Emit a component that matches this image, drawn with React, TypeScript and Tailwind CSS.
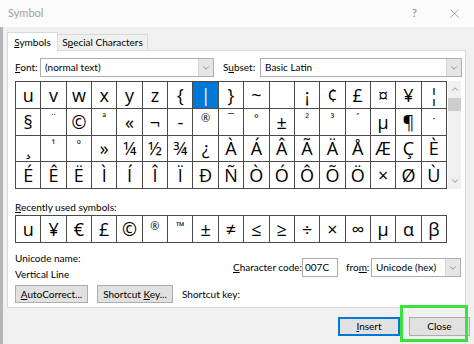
import { X, ChevronDown, ChevronUp } from 'lucide-react';

const gridRows = [
  ['u', 'v', 'w', 'x', 'y', 'z', '{', '|', '}', '~', '', '¡', '¢', '£', '¤', '¥', '¦'],
  ['§', '¨', '©', 'ª', '«', '¬', '-', '®', '¯', '°', '±', '²', '³', '´', 'µ', '¶', '·'],
  ['¸', '¹', 'º', '»', '¼', '½', '¾', '¿', 'À', 'Á', 'Â', 'Ã', 'Ä', 'Å', 'Æ', 'Ç', 'È'],
  ['É', 'Ê', 'Ë', 'Ì', 'Í', 'Î', 'Ï', 'Ð', 'Ñ', 'Ò', 'Ó', 'Ô', 'Õ', 'Ö', '×', 'Ø', 'Ù'],
];

const recent = ['u', '¥', '€', '£', '©', '®', '™', '±', '≠', '≤', '≥', '÷', '×', '∞', 'µ', 'α', 'β'];

// 작은 기호는 셀 안에서 위로 붙어 보이게
const small = new Set(['¨', '®', '¯', '°', '²', '³', '´', '¹', 'ª', 'º', '™', '·']);

const SelectBox = ({ value, className }: { value: string; className: string }) => (
  <div className={`flex h-[19px] items-center border border-[#adadad] bg-white ${className}`}>
    <span className="flex-1 pl-1 truncate">{value}</span>
    <div className="flex h-full w-[15px] items-center justify-center border-l border-[#d4d4d4] bg-[#e6e6e6]">
      <ChevronDown size={10} strokeWidth={1.5} className="text-[#606060]" />
    </div>
  </div>
);

const Cell = ({ ch, selected }: { ch: string; selected?: boolean }) => (
  <div
    className={`flex items-center justify-center border-r border-b border-[#4a4a4a] font-['Open_Sans','DejaVu_Sans',sans-serif] leading-none ${
      selected ? 'bg-[#0078d7] text-white' : 'text-black'
    } ${small.has(ch) ? 'text-[11px] pb-2' : 'text-[18px]'}`}
  >
    {ch}
  </div>
);

const App = () => {
  return (
    <div className="relative flex h-[344px] w-[474px] flex-col overflow-hidden whitespace-nowrap bg-[#f0f0f0] font-['Lato','DejaVu_Sans',sans-serif] text-[10px] text-black">
      {/* 타이틀바 */}
      <div className="flex h-[27px] items-center bg-[#fbfbfb] pl-2 pr-3">
        <span className="flex-1 text-[11px] text-[#a0a0a0]">Symbol</span>
        <span className="mr-[30px] text-[11px] text-[#8a8a8a]">?</span>
        <X size={15} strokeWidth={1} className="text-[#777]" />
      </div>

      <div className="flex flex-1 flex-col border-l-[3px] border-[#b5b5b5] pl-1">
        {/* 탭 */}
        <div className="mt-[5px] flex h-[18px] items-end">
          <div className="-mb-px z-10 flex h-[19px] w-[51px] items-center justify-center border border-b-0 border-[#d9d9d9] bg-white">
            <span><span className="underline">S</span>ymbols</span>
          </div>
          <div className="flex h-[16px] w-[90px] items-center justify-center border border-l-0 border-b-0 border-[#d9d9d9] bg-[#f0f0f0]">
            <span>S<span className="underline">p</span>ecial Characters</span>
          </div>
        </div>

        {/* 본문 패널 */}
        <div className="flex h-[258px] w-[459px] flex-col border border-[#d9d9d9] bg-white pl-[7px] pt-[7px]">
          <div className="flex h-[19px] items-center">
            <span className="w-[25px]"><span className="underline">F</span>ont:</span>
            <SelectBox value="(normal text)" className="w-[174px]" />
            <span className="ml-[9px] w-[37px]">S<span className="underline">u</span>bset:</span>
            <SelectBox value="Basic Latin" className="w-[202px]" />
          </div>

          {/* 기호 그리드 */}
          <div className="mt-[4px] flex h-[108px]">
            <div className="grid w-[432px] grid-cols-[repeat(17,minmax(0,1fr))] grid-rows-[repeat(4,minmax(0,1fr))] border-l border-t border-[#4a4a4a]">
              {gridRows.map((row, r) =>
                row.map((ch, c) => <Cell key={`${r}-${c}`} ch={ch} selected={r === 0 && c === 7} />),
              )}
            </div>
            <div className="ml-px flex w-[13px] flex-col items-center bg-[#f0f0f0]">
              <ChevronUp size={10} strokeWidth={1.5} className="mt-[3px] text-[#606060]" />
              <div className="mt-[4px] h-[13px] w-full bg-[#cdcdcd]" />
              <div className="flex-1" />
              <ChevronDown size={10} strokeWidth={1.5} className="mb-[3px] text-[#606060]" />
            </div>
          </div>

          <div className="mt-[10px] h-[16px] leading-[16px]">
            <span className="underline">R</span>ecently used symbols:
          </div>
          <div className="grid h-[28px] w-[432px] grid-cols-[repeat(17,minmax(0,1fr))] border-l border-t border-[#4a4a4a]">
            {recent.map((ch, i) => (
              <Cell key={i} ch={ch} />
            ))}
          </div>

          {/* 유니코드 정보 */}
          <div className="mt-[7px] flex">
            <div className="w-[218px] leading-[16px]">
              <div>Unicode name:</div>
              <div>Vertical Line</div>
            </div>
            <div className="mt-[8px] flex h-[19px] items-center">
              <span className="w-[67px]"><span className="underline">C</span>haracter code:</span>
              <div className="ml-[2px] flex h-[19px] w-[36px] items-center border border-[#adadad] pl-[2px]">007C</div>
              <span className="ml-[8px] w-[23px]">fro<span className="underline">m</span>:</span>
              <SelectBox value="Unicode (hex)" className="ml-[2px] w-[90px]" />
            </div>
          </div>

          {/* 버튼 */}
          <div className="mt-[3px] flex items-center">
            <div className="flex h-[18px] w-[73px] items-center justify-center border border-[#adadad] bg-[#e1e1e1]">
              <span><span className="underline">A</span>utoCorrect...</span>
            </div>
            <div className="ml-[9px] flex h-[18px] w-[76px] items-center justify-center border border-[#adadad] bg-[#e1e1e1]">
              <span>Shortcut <span className="underline">K</span>ey...</span>
            </div>
            <span className="ml-[9px]">Shortcut key:</span>
          </div>
        </div>

        {/* 하단 버튼 */}
        <div className="flex justify-end pr-[4px] pt-[9px]">
          <div className="flex h-[19px] w-[62px] items-center justify-center border-2 border-[#0078d7] bg-[#e1e1e1]">
            <span><span className="underline">I</span>nsert</span>
          </div>
          <div className="ml-[9px] flex h-[19px] w-[61px] items-center justify-center border border-[#adadad] bg-[#e1e1e1]">
            Close
          </div>
        </div>
      </div>

      {/* 강조 테두리 */}
      <div className="absolute left-[400px] top-[305px] h-[37px] w-[68px] border-[3px] border-[#3be23b]" />
    </div>
  );
};

export default App;
